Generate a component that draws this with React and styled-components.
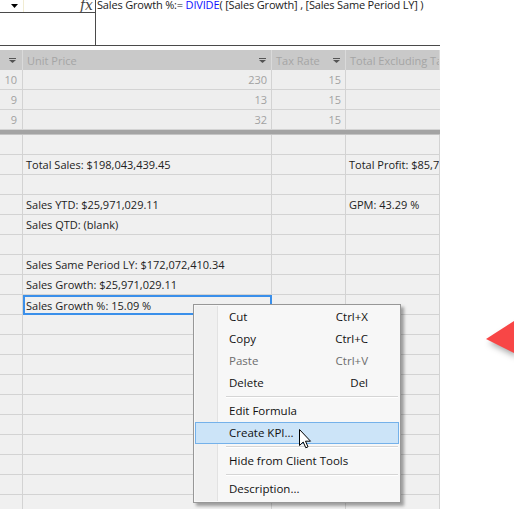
import React from "react";
import styled, { createGlobalStyle, css } from "styled-components";

const Global = createGlobalStyle`
  html, body { margin: 0; padding: 0; background: #fff; }
  body { font-family: "Open Sans", "Noto Sans", sans-serif; }
`;

const UI_FONT = `"Open Sans", "Noto Sans", sans-serif`;

const Page = styled.div`
  position: relative;
  width: 514px;
  height: 509px;
  overflow: hidden;
  background: #fff;
  font-family: ${UI_FONT};
`;

const FormulaBar = styled.div`
  display: flex;
  width: 440px;
  height: 46px;
  border-bottom: 1px solid #4a4a4a;
  box-sizing: border-box;
  background: #fff;
`;

const NameArea = styled.div`
  width: 96px;
  flex: none;
  border-right: 1px solid #4a4a4a;
  box-sizing: border-box;
`;

const NameRow = styled.div`
  display: flex;
  height: 13px;
  border-bottom: 1px solid #4a4a4a;
  box-sizing: border-box;
`;

const NameBox = styled.div`
  width: 24px;
  flex: none;
  display: flex;
  align-items: center;
  justify-content: flex-end;
  padding-right: 5px;
  box-sizing: border-box;
  border-right: 1px solid #f1ecd2;
`;

const Fx = styled.div`
  flex: 1;
  text-align: right;
  padding-right: 2px;
  font-family: "DejaVu Serif", "Liberation Serif", serif;
  font-style: italic;
  font-size: 14px;
  line-height: 11px;
  color: #444;
`;

const FormulaText = styled.div`
  flex: 1;
  padding-left: 1px;
  margin-top: -2px;
  font-size: 11px;
  letter-spacing: -0.17px;
  line-height: 13px;
  color: #222;
  white-space: nowrap;
  overflow: hidden;
`;

const Kw = styled.span`
  color: #1010ff;
`;

const Gap = styled.div`
  height: 4px;
`;

const Grid = styled.div`
  display: grid;
  grid-template-columns: 23px 249px 74px 94px;
  width: 440px;
  font-size: 11px;
`;

const cellBase = css`
  height: 20px;
  box-sizing: border-box;
  border-right: 1px solid #d3d3d3;
  display: flex;
  align-items: center;
  white-space: nowrap;
  overflow: hidden;
`;

const HeaderCell = styled.div`
  ${cellBase};
  background: #c9c9c9;
  border-right-color: #dadada;
  color: #a5a5a5;
  padding: 0 ${(p) => (p.$arrowOnly ? 6 : 5)}px 0 4px;
  justify-content: ${(p) => (p.$arrowOnly ? "flex-end" : "space-between")};
  &:last-child { border-right: none; }
`;

const DataCell = styled.div`
  ${cellBase};
  background: #eeeeee;
  border-bottom: 1px solid #d3d3d3;
  color: #a2a2a2;
  justify-content: flex-end;
  padding-right: ${(p) => (p.$first ? 5 : 4)}px;
  &:nth-child(4n) { border-right: none; }
`;

const Splitter = styled.div`
  grid-column: 1 / -1;
  height: 5px;
  background: #a4a4a4;
  border-bottom: 1px solid #c4c4c4;
  box-sizing: border-box;
`;

const MeasureCell = styled.div`
  ${cellBase};
  background: #f0f0f0;
  border-bottom: 1px solid #d3d3d3;
  color: #222;
  padding-left: 3px;
  ${(p) =>
    p.$selected &&
    css`
      border: 2px solid #3a8fea;
      padding-left: 1px;
    `}
`;

const Menu = styled.div`
  position: absolute;
  left: 193px;
  top: 304px;
  width: 208px;
  box-sizing: border-box;
  padding: 1px 1px 2px 1px;
  background: #f7f7f7;
  border: 1px solid #979797;
  box-shadow: 3px 3px 3px rgba(0, 0, 0, 0.35);
  font-size: 11.5px;
  color: #111;
  &::before {
    content: "";
    position: absolute;
    left: 1px;
    top: 1px;
    bottom: 1px;
    width: 22px;
    background: #f0f0f0;
    border-right: 1px solid #e2e2e2;
  }
`;

const Item = styled.div`
  position: relative;
  height: 22px;
  display: flex;
  align-items: center;
  justify-content: space-between;
  padding: 0 30px 1px 33px;
  box-sizing: border-box;
  color: ${(p) => (p.$disabled ? "#6d6d6d" : "#111")};
  border: 1px solid transparent;
  ${(p) =>
    p.$hot &&
    css`
      background: #cce4f8;
      border-color: #74b1ea;
    `}
`;

const Sep = styled.div`
  position: relative;
  height: 6px;
  display: flex;
  align-items: center;
  &::after {
    content: "";
    margin-left: 31px;
    margin-right: 1px;
    flex: 1;
    height: 1px;
    background: #d5d5d5;
    border-bottom: 1px solid #fff;
  }
`;

const Cursor = styled.svg`
  position: absolute;
  left: 299px;
  top: 429px;
`;

const RedPointer = styled.svg`
  position: absolute;
  left: 484px;
  top: 318px;
  overflow: visible;
  filter: drop-shadow(3px 4px 3px rgba(0, 0, 0, 0.35));
`;

const DropIcon = ({ color = "#555" }) => (
  <svg width="7" height="5" viewBox="0 0 7 5">
    <path d="M0 0.5 H7" stroke={color} strokeWidth="1" />
    <path d="M0 2 L7 2 L3.5 5 Z" fill={color} />
  </svg>
);

const dataRows = [
  ["10", "230", "15", ""],
  ["9", "13", "15", ""],
  ["9", "32", "15", ""],
];

const measureRows = [
  ["", ""],
  ["Total Sales: $198,043,439.45", "Total Profit: $85,729,180.90"],
  ["", ""],
  ["Sales YTD: $25,971,029.11", "GPM: 43.29 %"],
  ["Sales QTD: (blank)", ""],
  ["", ""],
  ["Sales Same Period LY: $172,072,410.34", ""],
  ["Sales Growth: $25,971,029.11", ""],
  ["Sales Growth %: 15.09 %", "", true],
  ...Array.from({ length: 10 }, () => ["", ""]),
];

const menuItems = [
  { label: "Cut", key: "Ctrl+X" },
  { label: "Copy", key: "Ctrl+C" },
  { label: "Paste", key: "Ctrl+V", disabled: true },
  { label: "Delete", key: "Del" },
  { sep: true },
  { label: "Edit Formula" },
  { label: "Create KPI...", hot: true },
  { sep: true },
  { label: "Hide from Client Tools" },
  { sep: true },
  { label: "Description..." },
];

export default function App() {
  return (
    <Page>
      <Global />
      <FormulaBar>
        <NameArea>
          <NameRow>
            <NameBox>
              <svg width="7" height="4" viewBox="0 0 7 4">
                <path d="M0 0 L7 0 L3.5 4 Z" fill="#000" />
              </svg>
            </NameBox>
            <Fx>fx</Fx>
          </NameRow>
        </NameArea>
        <FormulaText>
          Sales Growth %:= <Kw>DIVIDE</Kw>( [Sales Growth] , [Sales Same Period LY] )
        </FormulaText>
      </FormulaBar>
      <Gap />
      <Grid>
        <HeaderCell $arrowOnly>
          <DropIcon />
        </HeaderCell>
        <HeaderCell>
          <span>Unit Price</span>
          <DropIcon />
        </HeaderCell>
        <HeaderCell>
          <span>Tax Rate</span>
          <DropIcon />
        </HeaderCell>
        <HeaderCell>
          <span>Total Excluding Tax</span>
        </HeaderCell>
        {dataRows.map((r, i) =>
          r.map((v, j) => (
            <DataCell key={`d${i}-${j}`} $first={j === 0}>
              {v}
            </DataCell>
          ))
        )}
        <Splitter />
        {measureRows.map(([a, b, sel], i) => (
          <React.Fragment key={`m${i}`}>
            <MeasureCell />
            <MeasureCell $selected={sel}>{a}</MeasureCell>
            <MeasureCell />
            <MeasureCell>{b}</MeasureCell>
          </React.Fragment>
        ))}
      </Grid>
      <Menu>
        {menuItems.map((it, i) =>
          it.sep ? (
            <Sep key={i} />
          ) : (
            <Item key={i} $disabled={it.disabled} $hot={it.hot}>
              <span>{it.label}</span>
              <span>{it.key || ""}</span>
            </Item>
          )
        )}
      </Menu>
      <Cursor width="13" height="20" viewBox="0 0 13 20">
        <path
          d="M0.5 0.5 L0.5 16.5 L4.2 13 L6.8 18.8 L9 17.8 L6.5 12.2 L11.5 12.2 Z"
          fill="#fff"
          stroke="#000"
          strokeWidth="1"
          strokeLinejoin="round"
        />
      </Cursor>
      <RedPointer width="32" height="36" viewBox="0 0 32 36">
        <path d="M2 21 L30 3 L30 35 Z" fill="#f84646" />
      </RedPointer>
    </Page>
  );
}
